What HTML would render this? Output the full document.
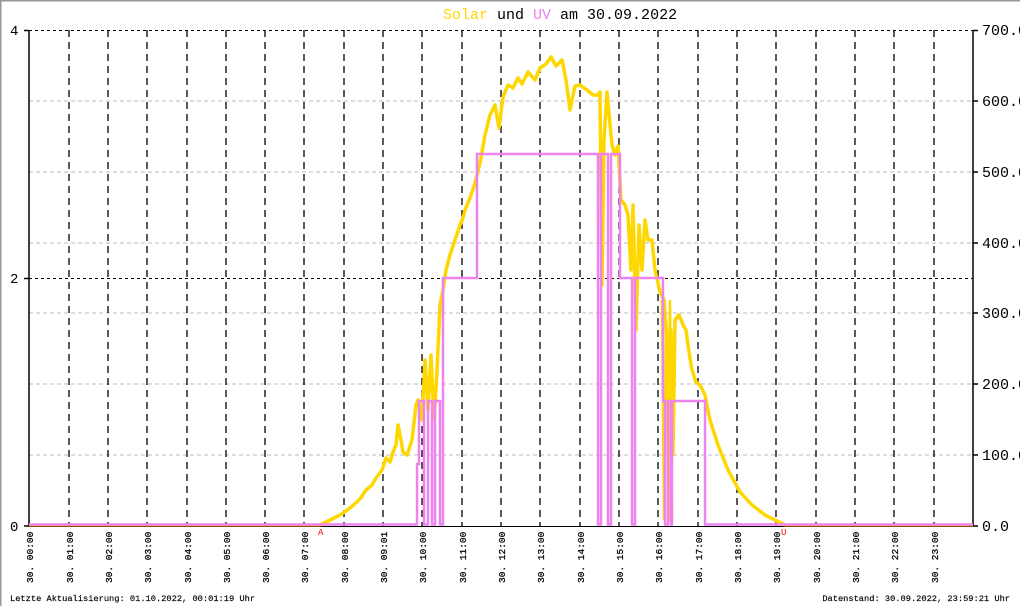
<!DOCTYPE html>
<html><head><meta charset="utf-8"><style>
html,body{margin:0;padding:0;background:#fff;}
svg{display:block;}
text{font-family:"Liberation Mono","DejaVu Sans Mono",monospace;}
</style></head><body>
<svg width="1020" height="606" viewBox="0 0 1020 606" xmlns="http://www.w3.org/2000/svg">
<rect x="0" y="0" width="1020" height="606" fill="#fff"/>
<path d="M0.5 606V0.5H1020" stroke="#999" stroke-width="2" fill="none"/>
<text x="443" y="19" font-size="15"><tspan fill="#ffd700">Solar</tspan><tspan fill="#000"> und </tspan><tspan fill="#ee82ee">UV</tspan><tspan fill="#000"> am 30.09.2022</tspan></text>
<g stroke="#bbb" stroke-width="1" stroke-dasharray="4,3">
<line x1="29" x2="973" y1="101" y2="101"/>
<line x1="29" x2="973" y1="172" y2="172"/>
<line x1="29" x2="973" y1="243" y2="243"/>
<line x1="29" x2="973" y1="313" y2="313"/>
<line x1="29" x2="973" y1="384" y2="384"/>
<line x1="29" x2="973" y1="455" y2="455"/>
</g>
<g stroke="#000" stroke-width="1" stroke-dasharray="3,3">
<line x1="29" x2="973" y1="30.5" y2="30.5"/>
<line x1="29" x2="973" y1="278.5" y2="278.5"/>
</g>
<g stroke="#000" stroke-width="1.3" stroke-dasharray="7,5">
<line x1="69" x2="69" y1="30" y2="526"/><line x1="108" x2="108" y1="30" y2="526"/><line x1="147" x2="147" y1="30" y2="526"/><line x1="187" x2="187" y1="30" y2="526"/><line x1="226" x2="226" y1="30" y2="526"/><line x1="265" x2="265" y1="30" y2="526"/><line x1="304" x2="304" y1="30" y2="526"/><line x1="344" x2="344" y1="30" y2="526"/><line x1="383" x2="383" y1="30" y2="526"/><line x1="422" x2="422" y1="30" y2="526"/><line x1="462" x2="462" y1="30" y2="526"/><line x1="501" x2="501" y1="30" y2="526"/><line x1="540" x2="540" y1="30" y2="526"/><line x1="580" x2="580" y1="30" y2="526"/><line x1="619" x2="619" y1="30" y2="526"/><line x1="658" x2="658" y1="30" y2="526"/><line x1="698" x2="698" y1="30" y2="526"/><line x1="737" x2="737" y1="30" y2="526"/><line x1="776" x2="776" y1="30" y2="526"/><line x1="816" x2="816" y1="30" y2="526"/><line x1="855" x2="855" y1="30" y2="526"/><line x1="894" x2="894" y1="30" y2="526"/><line x1="934" x2="934" y1="30" y2="526"/>
</g>
<g stroke="#000" stroke-width="1.5" fill="none">
<line x1="29" x2="29" y1="30" y2="526"/>
<line x1="973" x2="973" y1="30" y2="526"/>
<line x1="24" x2="29" y1="30.5" y2="30.5"/><line x1="24" x2="29" y1="278.5" y2="278.5"/><line x1="24" x2="29" y1="526" y2="526"/>
<line x1="973" x2="978" y1="30.5" y2="30.5"/><line x1="973" x2="978" y1="101" y2="101"/><line x1="973" x2="978" y1="172" y2="172"/><line x1="973" x2="978" y1="243" y2="243"/><line x1="973" x2="978" y1="313" y2="313"/><line x1="973" x2="978" y1="384" y2="384"/><line x1="973" x2="978" y1="455" y2="455"/><line x1="973" x2="978" y1="526" y2="526"/>
</g>
<line x1="29" x2="973" y1="526.5" y2="526.5" stroke="#000" stroke-width="1"/>
<g font-size="14" fill="#000">
<text x="10" y="35">4</text><text x="10" y="283">2</text><text x="10" y="531">0</text>
</g>
<g font-size="15" fill="#000">
<text x="982" y="35">700.0</text><text x="982" y="106">600.0</text><text x="982" y="177">500.0</text><text x="982" y="248">400.0</text><text x="982" y="318">300.0</text><text x="982" y="389">200.0</text><text x="982" y="460">100.0</text><text x="982" y="531">0.0</text>
</g>
<line x1="29" x2="320" y1="526" y2="526" stroke="#ffb000" stroke-width="1"/>
<polyline fill="none" stroke="#ffd700" stroke-width="3.5" stroke-linejoin="round" points="320,525 330,520 340,515 350,508 360,499 366,490 372,485 376,478 382,470 386,458 390,462 393,452 396,445 398,425 401,440 403,452 407,455 412,440 416,405 418,400 422,420 425,360 428,410 431,355 434,420 437,370 440,305 443,290 446,270 450,255 455,240 460,225 463,218 465,210 470,198 475,183 480,163 485,135 490,115 495,105 499,128 503,97 508,85 513,88 518,78 522,84 528,72 535,80 540,68 546,64 551,57 556,66 562,60 566,80 570,110 575,86 580,85 587,90 593,95 598,95 600,92 602,285 604,140 607,92 612,145 615,155 618,146 621,200 625,205 628,215 631,270 633,205 636,330 639,225 642,270 645,220 648,240 652,240 655,270 660,292 664,300 667,340 669,520 671,330 673,455 675,320 679,315 683,325 686,330 689,352 692,370 696,382 700,385 705,395 710,420 718,445 728,470 740,492 752,505 765,515 775,520 785,525"/>
<polyline fill="none" stroke="#ffd700" stroke-width="2.5" points="662,300 664,520 666,330 668,450 670,300 672,520"/>
<line x1="785" x2="973" y1="526" y2="526" stroke="#ffb000" stroke-width="1"/>
<polyline fill="none" stroke="#ee82ee" stroke-width="2.5" points="29,524.5 417,524.5 417,464 419,464 419,401 424,401 424,524.5 428,524.5 428,401 432,401 432,524.5 435,524.5 435,401 440,401 440,524.5 443,524.5 443,278 477,278 477,154 598,154 598,524.5 601,524.5 601,154 608,154 608,524.5 611,524.5 611,154 620,154 620,278 632,278 632,524.5 635,524.5 635,278 663,278 663,401 665,401 665,524.5 668,524.5 668,401 671,401 671,524.5 672,524.5 672,401 705,401 705,524.5 973,524.5"/>
<text x="318" y="535" font-size="9" fill="#e00">A</text>
<text x="781" y="535" font-size="9" fill="#e00">U</text>
<g font-size="9.5" fill="#000" stroke="#000" stroke-width="0.25">
<text transform="translate(33,583) rotate(-90)">30. 00:00</text>
<text transform="translate(73,583) rotate(-90)">30. 01:00</text>
<text transform="translate(112,583) rotate(-90)">30. 02:00</text>
<text transform="translate(151,583) rotate(-90)">30. 03:00</text>
<text transform="translate(191,583) rotate(-90)">30. 04:00</text>
<text transform="translate(230,583) rotate(-90)">30. 05:00</text>
<text transform="translate(269,583) rotate(-90)">30. 06:00</text>
<text transform="translate(308,583) rotate(-90)">30. 07:00</text>
<text transform="translate(348,583) rotate(-90)">30. 08:00</text>
<text transform="translate(387,583) rotate(-90)">30. 09:01</text>
<text transform="translate(426,583) rotate(-90)">30. 10:00</text>
<text transform="translate(466,583) rotate(-90)">30. 11:00</text>
<text transform="translate(505,583) rotate(-90)">30. 12:00</text>
<text transform="translate(544,583) rotate(-90)">30. 13:00</text>
<text transform="translate(584,583) rotate(-90)">30. 14:00</text>
<text transform="translate(623,583) rotate(-90)">30. 15:00</text>
<text transform="translate(662,583) rotate(-90)">30. 16:00</text>
<text transform="translate(702,583) rotate(-90)">30. 17:00</text>
<text transform="translate(741,583) rotate(-90)">30. 18:00</text>
<text transform="translate(780,583) rotate(-90)">30. 19:00</text>
<text transform="translate(820,583) rotate(-90)">30. 20:00</text>
<text transform="translate(859,583) rotate(-90)">30. 21:00</text>
<text transform="translate(898,583) rotate(-90)">30. 22:00</text>
<text transform="translate(938,583) rotate(-90)">30. 23:00</text>
</g>
<text x="10" y="601" font-size="8.7" fill="#000" stroke="#000" stroke-width="0.15">Letzte Aktualisierung: 01.10.2022, 00:01:19 Uhr</text>
<text x="1010" y="601" font-size="8.7" fill="#000" stroke="#000" stroke-width="0.15" text-anchor="end">Datenstand: 30.09.2022, 23:59:21 Uhr</text>
</svg>
</body></html>
